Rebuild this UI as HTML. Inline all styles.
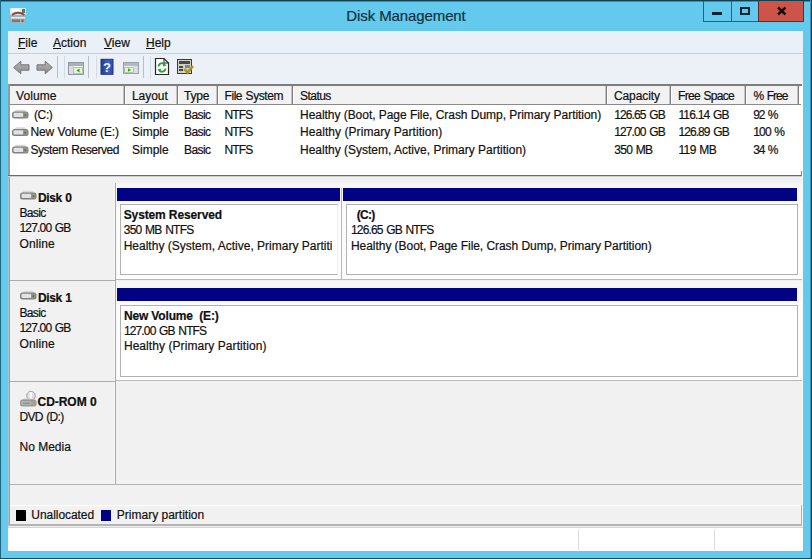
<!DOCTYPE html>
<html><head><meta charset="utf-8"><title>Disk Management</title>
<style>
*{box-sizing:border-box;margin:0;padding:0}
html,body{width:812px;height:559px;overflow:hidden;background:#63c9ed}
body{font-family:"Liberation Sans",sans-serif;font-size:12px;color:#111;position:relative}
.a{position:absolute}
.t{position:absolute;white-space:nowrap;line-height:16px;height:16px;-webkit-text-stroke:0.2px}
b{font-weight:bold;color:#101010}
u{text-decoration:underline;text-underline-offset:1px}
.cb{top:1px;height:21px;border:1px solid #1f6480;border-top:none}
.hs{position:absolute;top:86px;width:3px;height:18px;margin-left:-1px;background:#7c7c7c;border-right:1px solid #fdfdfd;border-left:1px solid #c4c4c4}
.hs2{position:absolute;top:87px;width:1px;height:17px;background:#f4f4f4}
.bar{position:absolute;height:13px;background:#020285}
.pbox{position:absolute;background:#fff;border:1px solid #b2b2b2}
.vl{position:absolute;width:1px;background:#a8a8a8}
.hl{position:absolute;height:1px;background:#adadad}
.ts{position:absolute;top:56px;width:1px;height:22px}
</style></head><body>
<!-- window frame edges -->
<div class="a" style="left:0;top:0;width:812px;height:1px;background:#123f50"></div>
<div class="a" style="left:1px;top:1px;width:809px;height:1px;background:#3a8fac"></div>
<div class="a" style="left:0;top:0;width:1px;height:559px;background:#1f677c"></div>
<div class="a" style="left:810px;top:0;width:1px;height:559px;background:#3f8fb2"></div>
<div class="a" style="left:811px;top:0;width:1px;height:559px;background:#123e5e"></div>
<div class="a" style="left:0;top:558px;width:812px;height:1px;background:#15485f"></div>
<div class="t" style="left:0;width:812px;top:6px;text-align:center;font-size:15px;line-height:20px;height:20px;color:#10303f;letter-spacing:-0.1px">Disk Management</div>

<!-- caption buttons -->
<div class="a cb" style="left:703px;width:29px"></div>
<div class="a cb" style="left:731px;width:28px"></div>
<div class="a cb" style="left:758px;width:46px;background:#cd5449;border-color:#5e2c2c"></div>
<div class="a" style="left:712px;top:12px;width:10px;height:3px;background:#0f2530"></div>
<div class="a" style="left:740px;top:7px;width:10px;height:8px;border:2px solid #0f2530"></div>
<svg class="a" style="left:776px;top:6px" width="11" height="10" viewBox="0 0 11 10"><path d="M2 1.500 L9.500 8.500 M9.500 1.500 L2 8.500" stroke="#1a0c0c" stroke-width="2.400"/></svg>

<!-- app icon -->
<svg class="a" style="left:9px;top:7px" width="18" height="17" viewBox="0 0 18 17">
<rect x="1" y="1" width="16" height="7" rx="1" fill="#dfe6e8"/>
<rect x="2" y="1.500" width="9" height="3" fill="#f8fafa"/>
<rect x="13" y="2" width="3" height="4" fill="#4f7a78"/>
<path d="M3 8 Q9 3.500 15.500 8" stroke="#8e4439" stroke-width="1.800" fill="none"/>
<rect x="1" y="9" width="16" height="7" rx="1" fill="#a7b2b6"/>
<rect x="2" y="10" width="14" height="1.500" fill="#e4eaec"/>
<rect x="3" y="12.500" width="8" height="2.500" fill="#6c7b82"/><rect x="12.500" y="12.500" width="2" height="2.500" fill="#56666e"/>
</svg>

<!-- menu bar -->
<div class="a" style="left:8px;top:31px;width:795px;height:22px;background:#e9f0f8"></div>
<div class="a" style="left:8px;top:53px;width:795px;height:1px;background:#c9ced6"></div>
<div class="t" style="left:18px;top:35px"><u>F</u>ile</div>
<div class="t" style="left:53px;top:35px"><u>A</u>ction</div>
<div class="t" style="left:104px;top:35px"><u>V</u>iew</div>
<div class="t" style="left:146px;top:35px"><u>H</u>elp</div>

<!-- toolbar -->
<div class="a" style="left:8px;top:54px;width:795px;height:30px;background:#ecf1f8"></div>
<div class="ts" style="left:57px;background:#b9bec6"></div><div class="ts" style="left:64px;background:#d3dbe6"></div>
<div class="ts" style="left:88px;background:#b9bec6"></div><div class="ts" style="left:96px;background:#d3dbe6"></div>
<div class="ts" style="left:143px;background:#b9bec6"></div><div class="ts" style="left:150px;background:#d3dbe6"></div>
<svg class="a" style="left:8px;top:54px" width="200" height="30" viewBox="0 0 200 30">
 <linearGradient id="ag" x1="0" y1="0" x2="0" y2="1"><stop offset="0" stop-color="#b4b4b4"/><stop offset="1" stop-color="#8c8c8c"/></linearGradient>
 <path d="M5.700 13.500 L12.800 7.200 L12.800 10.800 L21 10.800 L21 16.200 L12.800 16.200 L12.800 19.800 Z" fill="url(#ag)" stroke="#747474" stroke-width="1" stroke-linejoin="round"/>
 <path d="M44.300 13.500 L37.200 7.200 L37.200 10.800 L29 10.800 L29 16.200 L37.200 16.200 L37.200 19.800 Z" fill="url(#ag)" stroke="#747474" stroke-width="1" stroke-linejoin="round"/>
 <g id="w1">
 <rect x="60.500" y="8.500" width="15" height="12" fill="#eef0f2" stroke="#8f979f"/>
 <rect x="61" y="9" width="14" height="3" fill="#a9b1b9"/>
 <rect x="65.500" y="13.500" width="9" height="6" fill="#e4f3d6" stroke="#a5bb98" stroke-width=".8"/>
 <path d="M71.500 14.500 L68.500 16.500 L71.500 18.500Z" fill="#3f9a2f"/>
 <rect x="61" y="12" width="4" height="8" fill="#d9dde1"/>
 </g>
 <defs><linearGradient id="hg" x1="0" x2="1"><stop offset="0" stop-color="#26398a"/><stop offset="0.600" stop-color="#3f62c6"/><stop offset="1" stop-color="#2f4aa4"/></linearGradient></defs>
 <rect x="93" y="5.300" width="12" height="15" fill="url(#hg)" stroke="#22347c"/>
 <text x="99" y="17.500" font-family="Liberation Sans, sans-serif" font-weight="bold" font-size="13" fill="#eef2ff" text-anchor="middle">?</text>
 <g>
 <rect x="115.500" y="8.500" width="15" height="11" fill="#eef0f2" stroke="#9aa1a8"/>
 <rect x="116" y="9" width="14" height="3" fill="#b3bac1"/>
 <rect x="116.500" y="13.500" width="9" height="5" fill="#e4f3d6" stroke="#a5bb98" stroke-width=".8"/>
 <path d="M120 14.200 L123 16 L120 17.800Z" fill="#3f9a2f"/>
 <rect x="126" y="12" width="4" height="7" fill="#d9dde1"/>
 </g>
 <path d="M147.500 4.500 L156 4.500 L160.500 9 L160.500 20.500 L147.500 20.500 Z" fill="#fff" stroke="#262626" stroke-width="1.200"/>
 <path d="M156 4.500 L156 9 L160.500 9" fill="none" stroke="#262626" stroke-width="1"/>
 <path d="M150.500 12.500 A3.500 3.500 0 0 1 157 11" stroke="#2f9e38" stroke-width="1.800" fill="none"/>
 <path d="M157.500 14.500 A3.500 3.500 0 0 1 151 16" stroke="#2f9e38" stroke-width="1.800" fill="none"/>
 <path d="M155.500 9 L158.500 11.500 L155 12.500Z" fill="#2f9e38"/><path d="M152.500 18 L149.500 15.500 L153 14.500Z" fill="#2f9e38"/>
 <rect x="169.500" y="5.500" width="14" height="14" fill="#cfd2c4" stroke="#3c3c34"/>
 <rect x="171" y="7" width="11" height="3" fill="#4a4a40"/>
 <rect x="171" y="12" width="4" height="2" fill="#4a4a40"/><rect x="171" y="15" width="4" height="2" fill="#4a4a40"/>
 <rect x="177" y="11" width="5" height="3" fill="#8a8a7a"/>
 <path d="M176.500 15 L179.500 18.500 L185 12" stroke="#a89a1c" stroke-width="2.600" fill="none"/>
</svg>

<!-- volume list -->
<div class="a" style="left:8px;top:84px;width:795px;height:93px;background:#fff"></div>
<div class="a" style="left:8px;top:84px;width:794px;height:2px;background:#7c7c7c"></div>
<div class="a" style="left:8px;top:84px;width:2px;height:92px;background:#8b9ea6"></div>
<div class="a" style="left:801px;top:171px;width:1px;height:5px;background:#8a8a8a"></div>
<div class="a" style="left:8px;top:175px;width:794px;height:1px;background:#6c6c6c"></div>
<div class="a" style="left:8px;top:176px;width:794px;height:1px;background:#cfcfcf"></div>
<div class="a" style="left:10px;top:86px;width:789px;height:18px;background:#f2f2f2"></div>
<div class="a" style="left:10px;top:104px;width:791px;height:1px;background:#8a8a8a"></div>
<div class="hs" style="left:124px"></div><div class="hs" style="left:177px"></div><div class="hs" style="left:217px"></div><div class="hs" style="left:292px"></div><div class="hs" style="left:606px"></div><div class="hs" style="left:670px"></div><div class="hs" style="left:745px"></div><div class="hs" style="left:798px"></div>
<!-- list drive icons -->
<svg class="a" style="left:11px;top:109px" width="19" height="46" viewBox="0 0 19 46">
<g transform="translate(0,0)"><path d="M3 3 L5 0.800 L13.500 0.800 L15.500 3Z" fill="#d9d9d9"/>
 <rect x="1" y="2.500" width="16.500" height="7" rx="2.500" ry="2.500" fill="#808080"/>
 <rect x="2.500" y="3.800" width="10" height="4.200" rx="1" fill="#e2e2e2"/>
 <rect x="12" y="3.600" width="4.500" height="4.800" rx="1" fill="#8d9a86"/><rect x="13.500" y="5.200" width="1.600" height="2" fill="#5f6d5c"/></g>
<g transform="translate(0,17.5)"><path d="M3 3 L5 0.800 L13.500 0.800 L15.500 3Z" fill="#d9d9d9"/>
 <rect x="1" y="2.500" width="16.500" height="7" rx="2.500" ry="2.500" fill="#808080"/>
 <rect x="2.500" y="3.800" width="10" height="4.200" rx="1" fill="#e2e2e2"/>
 <rect x="12" y="3.600" width="4.500" height="4.800" rx="1" fill="#8d9a86"/><rect x="13.500" y="5.200" width="1.600" height="2" fill="#5f6d5c"/></g>
<g transform="translate(0,35)"><path d="M3 3 L5 0.800 L13.500 0.800 L15.500 3Z" fill="#d9d9d9"/>
 <rect x="1" y="2.500" width="16.500" height="7" rx="2.500" ry="2.500" fill="#808080"/>
 <rect x="2.500" y="3.800" width="10" height="4.200" rx="1" fill="#e2e2e2"/>
 <rect x="12" y="3.600" width="4.500" height="4.800" rx="1" fill="#8d9a86"/><rect x="13.500" y="5.200" width="1.600" height="2" fill="#5f6d5c"/></g>
</svg>

<!-- lower pane -->
<div class="a" style="left:8px;top:177px;width:794px;height:347px;background:#f1f1f1"></div>
<div class="a" style="left:8px;top:177px;width:1px;height:349px;background:#a9c3cd"></div><div class="a" style="left:9px;top:177px;width:1px;height:349px;background:#9e9e9e"></div>
<div class="a" style="left:802px;top:177px;width:1px;height:351px;background:#fafafa"></div>
<!-- label column edges -->
<div class="vl" style="left:114px;top:183px;height:302px;background:#fbfbfb"></div>
<div class="vl" style="left:115px;top:183px;height:302px"></div>
<div class="hl" style="left:10px;top:280px;width:106px"></div>
<div class="hl" style="left:10px;top:381px;width:106px"></div>
<div class="hl" style="left:10px;top:484px;width:792px;background:#b4b4b4"></div>
<!-- label icons -->
<svg class="a" style="left:19px;top:190px" width="19" height="11" viewBox="0 0 19 11"><g transform="translate(0,0)"><path d="M3 3 L5 0.800 L13.500 0.800 L15.500 3Z" fill="#d9d9d9"/>
 <rect x="1" y="2.500" width="16.500" height="7" rx="2.500" ry="2.500" fill="#808080"/>
 <rect x="2.500" y="3.800" width="10" height="4.200" rx="1" fill="#e2e2e2"/>
 <rect x="12" y="3.600" width="4.500" height="4.800" rx="1" fill="#8d9a86"/><rect x="13.500" y="5.200" width="1.600" height="2" fill="#5f6d5c"/></g></svg>
<svg class="a" style="left:19px;top:290px" width="19" height="11" viewBox="0 0 19 11"><g transform="translate(0,0)"><path d="M3 3 L5 0.800 L13.500 0.800 L15.500 3Z" fill="#d9d9d9"/>
 <rect x="1" y="2.500" width="16.500" height="7" rx="2.500" ry="2.500" fill="#808080"/>
 <rect x="2.500" y="3.800" width="10" height="4.200" rx="1" fill="#e2e2e2"/>
 <rect x="12" y="3.600" width="4.500" height="4.800" rx="1" fill="#8d9a86"/><rect x="13.500" y="5.200" width="1.600" height="2" fill="#5f6d5c"/></g></svg>
<svg class="a" style="left:19px;top:389px" width="19" height="19" viewBox="0 0 19 19">
 <ellipse cx="12" cy="6.800" rx="4.300" ry="4.500" fill="#dedede" stroke="#a4a4a4"/>
 <rect x="10.500" y="3" width="2.600" height="8" fill="#f6f6f6"/>
 <path d="M3 11 L5 9.600 L14 9.600 L16 11Z" fill="#cfcfcf"/>
 <rect x="1" y="10.500" width="16.500" height="7" rx="2.500" fill="#9a9a9a"/>
 <rect x="2.500" y="12.500" width="10" height="3" rx="1" fill="#c9c9c9"/><rect x="3.500" y="13.500" width="8" height="1.200" fill="#7e7e7e"/>
 <rect x="12.500" y="12" width="3.800" height="4.200" rx="1" fill="#9aa692"/>
</svg>

<!-- disk 0 partitions -->
<div class="a" style="left:116px;top:183px;width:686px;height:96px;background:#f7f7f7"></div>
<div class="hl" style="left:116px;top:279px;width:686px;background:#b9b9b9"></div>
<div class="bar" style="left:117px;top:188px;width:223px"></div>
<div class="bar" style="left:343px;top:188px;width:454px"></div>
<div class="vl" style="left:341px;top:188px;height:91px;background:#b9b9b9"></div>
<div class="a" style="left:117px;top:201px;width:224px;height:78px;background:#fcfcfc"></div>
<div class="a" style="left:343px;top:201px;width:459px;height:78px;background:#fcfcfc"></div>
<div class="pbox" style="left:120px;top:204px;width:218px;height:71px;border-right-color:#ededed"></div>
<div class="pbox" style="left:346px;top:204px;width:452px;height:71px"></div>

<!-- disk 1 partitions -->
<div class="a" style="left:116px;top:281px;width:686px;height:99px;background:#f7f7f7"></div>
<div class="hl" style="left:116px;top:380px;width:686px;background:#b9b9b9"></div>
<div class="bar" style="left:117px;top:288px;width:680px"></div>
<div class="a" style="left:117px;top:301px;width:685px;height:79px;background:#fcfcfc"></div>
<div class="pbox" style="left:120px;top:305px;width:678px;height:72px"></div>

<!-- legend -->
<div class="hl" style="left:10px;top:505px;width:792px;background:#fdfdfd"></div>
<div class="vl" style="left:801px;top:505px;height:20px;background:#b0b0b0"></div>
<div class="a" style="left:8px;top:524px;width:794px;height:2px;background:#b4b4b4"></div>
<div class="a" style="left:16px;top:510px;width:10px;height:11px;background:#000"></div>
<div class="a" style="left:101px;top:510px;width:10px;height:11px;background:#020285"></div>

<!-- status bar -->
<div class="a" style="left:8px;top:526px;width:795px;height:1px;background:#eeeeee"></div>
<div class="a" style="left:8px;top:527px;width:795px;height:1px;background:#d4d4d4"></div>
<div class="a" style="left:8px;top:528px;width:795px;height:23px;background:#fff"></div>
<div class="a" style="left:578px;top:530px;width:1px;height:20px;background:#dcdcdc"></div>
<div class="a" style="left:714px;top:530px;width:1px;height:20px;background:#dcdcdc"></div>

<!-- texts -->
<div class="t" style="left:16px;top:88px;letter-spacing:0.09px;">Volume</div>
<div class="t" style="left:132px;top:88px;letter-spacing:-0.06px;">Layout</div>
<div class="t" style="left:184px;top:88px;letter-spacing:-0.18px;">Type</div>
<div class="t" style="left:224.5px;top:88px;word-spacing:0.59px;letter-spacing:-0.43px;">File System</div>
<div class="t" style="left:300px;top:88px;letter-spacing:-0.54px;">Status</div>
<div class="t" style="left:614px;top:88px;letter-spacing:-0.11px;">Capacity</div>
<div class="t" style="left:678px;top:88px;word-spacing:0.97px;letter-spacing:-0.7px;">Free Space</div>
<div class="t" style="left:753.5px;top:88px;word-spacing:1.25px;letter-spacing:-0.99px;">% Free</div>
<div class="t" style="left:34px;top:107px;letter-spacing:-0.38px;">(C:)</div>
<div class="t" style="left:30.5px;top:124px;letter-spacing:-0.11px;">New Volume (E:)</div>
<div class="t" style="left:30.5px;top:142px;word-spacing:0.67px;letter-spacing:-0.46px;">System Reserved</div>
<div class="t" style="left:132px;top:107px;">Simple</div>
<div class="t" style="left:184px;top:107px;letter-spacing:-0.59px;">Basic</div>
<div class="t" style="left:224.5px;top:107px;letter-spacing:-0.84px;">NTFS</div>
<div class="t" style="left:132px;top:124px;">Simple</div>
<div class="t" style="left:184px;top:124px;letter-spacing:-0.59px;">Basic</div>
<div class="t" style="left:224.5px;top:124px;letter-spacing:-0.84px;">NTFS</div>
<div class="t" style="left:132px;top:142px;">Simple</div>
<div class="t" style="left:184px;top:142px;letter-spacing:-0.59px;">Basic</div>
<div class="t" style="left:224.5px;top:142px;letter-spacing:-0.84px;">NTFS</div>
<div class="t" style="left:300px;top:107px;letter-spacing:-0.04px;">Healthy (Boot, Page File, Crash Dump, Primary Partition)</div>
<div class="t" style="left:300px;top:124px;letter-spacing:0.06px;">Healthy (Primary Partition)</div>
<div class="t" style="left:300px;top:142px;">Healthy (System, Active, Primary Partition)</div>
<div class="t" style="left:614.3px;top:107px;word-spacing:1.24px;letter-spacing:-0.91px;">126.65 GB</div>
<div class="t" style="left:614.3px;top:124px;word-spacing:1.24px;letter-spacing:-0.91px;">127.00 GB</div>
<div class="t" style="left:614.3px;top:142px;word-spacing:0.87px;letter-spacing:-0.69px;">350 MB</div>
<div class="t" style="left:678.4px;top:107px;word-spacing:1.08px;letter-spacing:-0.8px;">116.14 GB</div>
<div class="t" style="left:678.4px;top:124px;word-spacing:1.24px;letter-spacing:-0.91px;">126.89 GB</div>
<div class="t" style="left:678.4px;top:142px;word-spacing:0.71px;letter-spacing:-0.56px;">119 MB</div>
<div class="t" style="left:753.3px;top:107px;word-spacing:1.3px;letter-spacing:-1.14px;">92 %</div>
<div class="t" style="left:753.3px;top:124px;word-spacing:1.07px;letter-spacing:-0.88px;">100 %</div>
<div class="t" style="left:753.3px;top:142px;word-spacing:1.3px;letter-spacing:-1.14px;">34 %</div>
<div class="t" style="left:38px;top:190px;word-spacing:0.5px;letter-spacing:-0.39px;"><b>Disk 0</b></div>
<div class="t" style="left:19.5px;top:205px;letter-spacing:-0.67px;">Basic</div>
<div class="t" style="left:19.5px;top:220px;word-spacing:1.13px;letter-spacing:-0.83px;">127.00 GB</div>
<div class="t" style="left:19.5px;top:236px;letter-spacing:0.09px;">Online</div>
<div class="t" style="left:38px;top:290px;word-spacing:0.5px;letter-spacing:-0.39px;"><b>Disk 1</b></div>
<div class="t" style="left:19.5px;top:305px;letter-spacing:-0.67px;">Basic</div>
<div class="t" style="left:19.5px;top:320px;word-spacing:1.13px;letter-spacing:-0.83px;">127.00 GB</div>
<div class="t" style="left:19.5px;top:336px;letter-spacing:0.09px;">Online</div>
<div class="t" style="left:37.5px;top:394px;letter-spacing:-0.03px;"><b>CD-ROM 0</b></div>
<div class="t" style="left:19.5px;top:409px;word-spacing:0.93px;letter-spacing:-0.7px;">DVD (D:)</div>
<div class="t" style="left:19.5px;top:439px;">No Media</div>
<div class="t" style="left:123.7px;top:207px;letter-spacing:-0.12px;"><b>System Reserved</b></div>
<div class="t" style="left:123.7px;top:222px;word-spacing:0.88px;letter-spacing:-0.71px;">350 MB NTFS</div>
<div class="t" style="left:123.7px;top:238px;width:208.7px;overflow:hidden;">Healthy (System, Active, Primary Partition)</div>
<div class="t" style="left:356.8px;top:207px;letter-spacing:-0.76px;"><b>(C:)</b></div>
<div class="t" style="left:351px;top:222px;word-spacing:1.11px;letter-spacing:-0.85px;">126.65 GB NTFS</div>
<div class="t" style="left:351px;top:238px;letter-spacing:-0.05px;">Healthy (Boot, Page File, Crash Dump, Primary Partition)</div>
<div class="t" style="left:123.9px;top:308px;letter-spacing:-0.15px;"><b>New Volume&nbsp; (E:)</b></div>
<div class="t" style="left:123.9px;top:323px;word-spacing:1.11px;letter-spacing:-0.85px;">127.00 GB NTFS</div>
<div class="t" style="left:123.9px;top:338px;letter-spacing:0.07px;">Healthy (Primary Partition)</div>
<div class="t" style="left:31.3px;top:507px;letter-spacing:-0.05px;">Unallocated</div>
<div class="t" style="left:116.8px;top:507px;">Primary partition</div>
</body></html>
